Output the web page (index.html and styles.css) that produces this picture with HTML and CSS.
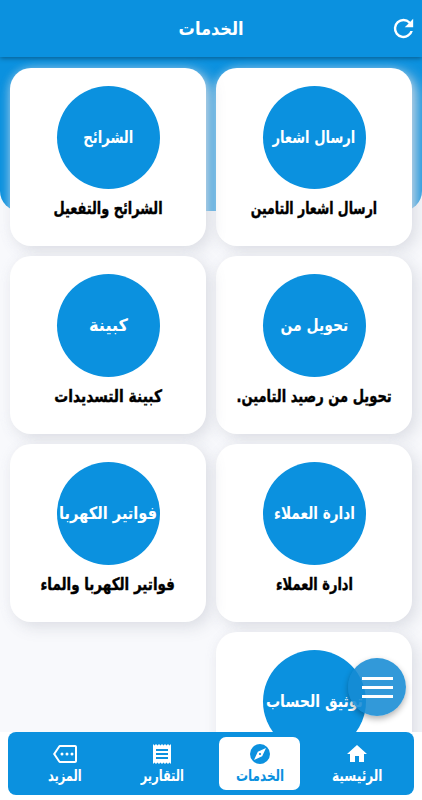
FILE: index.html
```html
<!DOCTYPE html>
<html lang="ar" dir="rtl">
<head>
<meta charset="utf-8">
<title>الخدمات</title>
<link rel="stylesheet" href="styles.css">
</head>
<body>
<header class="topbar">
  <h1><span class="t" style="--s:.9">الخدمات</span></h1>
  <svg class="refresh" viewBox="0 0 24 24"><path d="M17.65 6.35A7.96 7.96 0 0 0 12 4a8 8 0 1 0 7.73 10h-2.08A6 6 0 1 1 12 6c1.66 0 3.14.69 4.22 1.78L13 11h7V4z"/></svg>
</header>
<main class="content">
  <div class="backdrop"></div>
  <section class="grid">
    <article class="card"><div class="disc"><span class="t" style="--s:.77">ارسال اشعار</span></div><p><span class="t" style="--s:.735">ارسال اشعار التامين</span></p></article>
    <article class="card"><div class="disc"><span class="t" style="--s:.775">الشرائح</span></div><p><span class="t" style="--s:.757">الشرائح والتفعيل</span></p></article>
    <article class="card"><div class="disc"><span class="t" style="--s:.82">تحويل من</span></div><p><span class="t" style="--s:.768">تحويل من رصيد التامين.</span></p></article>
    <article class="card"><div class="disc"><span class="t" style="--s:.95">كبينة</span></div><p><span class="t" style="--s:.814">كبينة التسديدات</span></p></article>
    <article class="card"><div class="disc"><span class="t" style="--s:.8">ادارة العملاء</span></div><p><span class="t" style="--s:.763">ادارة العملاء</span></p></article>
    <article class="card"><div class="disc"><span class="t" style="--s:.86">فواتير الكهربا</span></div><p><span class="t" style="--s:.794">فواتير الكهربا والماء</span></p></article>
    <article class="card"><div class="disc"><span class="t" style="--s:.83">توثيق الحساب</span></div></article>
  </section>
  <button class="fab" aria-label="القائمة"><i></i><i></i><i></i></button>
</main>
<footer class="bottom">
  <nav class="tabs">
    <a class="tab"><svg viewBox="0 0 24 24"><path d="M10 20v-6h4v6h5v-8h3L12 3 2 12h3v8z"/></svg><span class="t" style="--s:.76">الرئيسية</span></a>
    <a class="tab active"><svg viewBox="0 0 24 24"><path d="M12 10.900a1.100 1.100 0 1 0 0 2.200 1.100 1.100 0 0 0 0-2.200zM12 2a10 10 0 1 0 0 20 10 10 0 0 0 0-20zm2.190 12.190L6 18l3.810-8.190L18 6z"/></svg><span class="t" style="--s:.75">الخدمات</span></a>
    <a class="tab"><svg viewBox="0 0 24 24"><path d="M18 17H6v-2h12zm0-4H6v-2h12zm0-4H6V7h12zM3 22l1.500-1.500L6 22l1.500-1.500L9 22l1.500-1.500L12 22l1.500-1.500L15 22l1.500-1.500L18 22l1.500-1.500L21 22V2l-1.500 1.500L18 2l-1.500 1.500L15 2l-1.500 1.500L12 2l-1.500 1.500L9 2 7.500 3.500 6 2 4.500 3.500 3 2z"/></svg><span class="t" style="--s:.71">التقارير</span></a>
    <a class="tab"><svg viewBox="0 0 24 24"><path d="M22 3H7c-.69 0-1.230.350-1.590.880L0 12l5.410 8.110c.360.530.970.890 1.660.890H22c1.100 0 2-.9 2-2V5c0-1.100-.9-2-2-2zm0 16H7.070L2.400 12l4.660-7H22z"/><circle cx="9" cy="12" r="1.500"/><circle cx="14" cy="12" r="1.500"/><circle cx="19" cy="12" r="1.500"/></svg><span class="t" style="--s:.71">المزيد</span></a>
  </nav>
</footer>
</body>
</html>
```
FILE: styles.css
```css
* { box-sizing: border-box; margin: 0; padding: 0; }
body {
  height: 800px;
  overflow: hidden;
  display: flex;
  flex-direction: column;
  background: #fff;
  font-family: "DejaVu Sans", sans-serif;
  font-weight: bold;
  color: #000;
}
/* --s condenses each label horizontally */
.t { display: block; white-space: nowrap; flex: none; transform: scaleX(var(--s, 1)); }
.topbar {
  position: relative;
  z-index: 2;
  height: 57px;
  flex: none;
  display: grid;
  grid-template-columns: 38px 1fr 38px;
  align-items: center;
  background: #0b91df;
  color: #fff;
  box-shadow: 0 1px 5px rgba(0, 0, 0, .4);
}
.topbar h1 { grid-column: 2; grid-row: 1; font-size: 18px; display: flex; justify-content: center; padding-bottom: 1px; }
.refresh { grid-column: 1; grid-row: 1; justify-self: end; width: 29px; height: 29px; margin-left: 5px; fill: #fff; }
.content { position: relative; flex: none; height: 675px; overflow: hidden; background: #f8f9fc; }
.backdrop { position: absolute; inset: 0 0 auto; height: 154px; border-radius: 0 0 20px 20px; background: #0b91df; }
.grid {
  position: relative;
  display: grid;
  grid-template-columns: 196px 196px;
  grid-auto-rows: 178px;
  gap: 10px;
  padding: 11px 10px 0;
}
.card {
  display: flex;
  flex-direction: column;
  align-items: center;
  padding-top: 18px;
  border-radius: 21px;
  background: #fff;
  box-shadow: 5px 5px 15px rgba(217, 219, 226, .9), -1px 1px 8px rgba(240, 242, 246, .35);
}
.disc {
  width: 103px;
  height: 103px;
  flex: none;
  border-radius: 50%;
  background: #0b91df;
  color: #fff;
  display: flex;
  align-items: center;
  justify-content: center;
  padding-bottom: 2px;
  font-size: 17px;
}
.card p { height: 38px; display: flex; align-items: center; font-size: 17px; -webkit-text-stroke: .4px #000; }
.fab {
  position: absolute;
  left: 348px;
  top: 601px;
  width: 58px;
  height: 58px;
  border: 0;
  border-radius: 50%;
  display: flex;
  flex-direction: column;
  align-items: center;
  justify-content: center;
  gap: 6px;
  background: rgba(22, 139, 212, .88);
  box-shadow: 0 3px 6px rgba(0, 0, 0, .3);
}
.fab i { width: 31px; height: 3px; background: #fff; }
.bottom { flex: 1; padding: 0 8px 5px; }
.tabs {
  height: 63px;
  display: grid;
  grid-template-columns: repeat(4, 1fr);
  padding: 5px 8px;
  border-radius: 8px;
  background: #0b91df;
}
.tab {
  width: 81px;
  height: 53px;
  justify-self: center;
  border-radius: 7px;
  display: flex;
  flex-direction: column;
  align-items: center;
  padding-top: 5px;
  color: #fff;
  font-size: 16px;
  line-height: 19px;
}
.tab svg { width: 24px; height: 24px; fill: currentColor; flex: none; }
.active { background: #fff; color: #0b91df; }
```
